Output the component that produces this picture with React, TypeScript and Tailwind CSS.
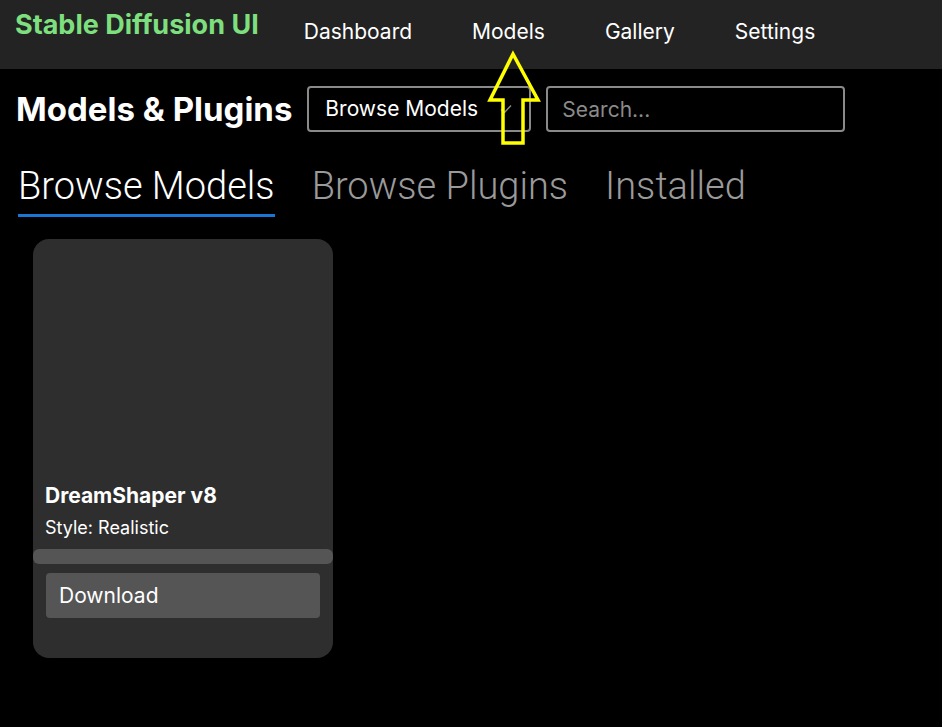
import React, { useState } from 'react';

const NAV = ['Dashboard', 'Models', 'Gallery', 'Settings'];
const TABS = ['Browse Models', 'Browse Plugins', 'Installed'];

const App: React.FC = () => {
  const [tab, setTab] = useState(0);

  return (
    <div className="relative min-h-[727px] w-full bg-black text-white font-['Inter',sans-serif]">
      {/* top bar */}
      <header className="flex h-[69px] items-start bg-[#232323] pl-[15px]">
        <h1 className="mt-[7px] text-[27px] font-bold leading-[36px] text-[#7ddf7e]">Stable Diffusion UI</h1>
        <nav className="ml-[45px] mt-[17px] flex gap-[60px] text-[21px] leading-[30px]">
          {NAV.map((item) => (
            <a key={item} className="cursor-pointer text-white">
              {item}
            </a>
          ))}
        </nav>
      </header>

      {/* title + filters */}
      <div className="flex items-center pl-4 pt-[17px]">
        <h2 className="text-[33px] font-bold leading-[40px]">Models &amp; Plugins</h2>
        <div className="ml-[15px] flex h-[46px] w-[224px] items-center justify-between rounded-[4px] border-2 border-[#8a8a8a] pl-4 pr-4">
          <span className="text-[21px] leading-[28px]">Browse Models</span>
          <svg width="14" height="14" viewBox="0 0 14 14" className="text-[#8a8a8a]">
            <path d="M2 7.5 L5.5 10.5 L12 3.5" fill="none" stroke="currentColor" strokeWidth="1.4" />
          </svg>
        </div>
        <input
          placeholder="Search..."
          className="ml-[15px] h-[46px] w-[299px] rounded-[4px] border-2 border-[#8a8a8a] bg-black px-[14px] text-[21px] text-white outline-none placeholder:text-[#8a8a8a]"
        />
      </div>

      {/* tabs */}
      <div className="mt-[31px] flex gap-[37px] pl-[18px] font-['Roboto',sans-serif] font-light">
        {TABS.map((t, i) => (
          <button
            key={t}
            onClick={() => setTab(i)}
            className={
              i === tab
                ? 'border-b-[3px] border-[#1976d2] pb-[5px] text-[38px] leading-[46px] text-white'
                : 'border-b-[3px] border-transparent pb-[5px] text-[38px] leading-[46px] text-[#9a9a9a]'
            }
          >
            {t}
          </button>
        ))}
      </div>

      {/* cards */}
      <div className="mt-[22px] flex pl-[33px]">
        <div className="flex h-[419px] w-[300px] flex-col rounded-[16px] bg-[#2e2e2e]">
          <div className="h-[243px]" />
          <div className="px-3">
            <h3 className="text-[21px] font-bold leading-[28px]">DreamShaper v8</h3>
            <p className="mt-[6px] text-[18px] leading-[24px]">Style: Realistic</p>
          </div>
          <div className="mt-[9px] h-[15px] w-full rounded-[6px] bg-[#555555]" />
          <div className="px-[13px] pt-[9px]">
            <button className="flex h-[45px] w-[274px] items-center rounded-[4px] bg-[#555555] pl-[13px] text-[21px] leading-[28px] text-white">
              Download
            </button>
          </div>
        </div>
      </div>

      {/* annotation arrow */}
      <svg className="pointer-events-none absolute left-[485px] top-[50px]" width="60" height="96" viewBox="0 0 60 96">
        <path
          d="M28 4 L53 50 L38 50 L38 93 L18 93 L18 50 L5 50 Z"
          fill="none"
          stroke="#ffff00"
          strokeWidth="3.5"
          strokeLinejoin="miter"
        />
      </svg>
    </div>
  );
};

export default App;
